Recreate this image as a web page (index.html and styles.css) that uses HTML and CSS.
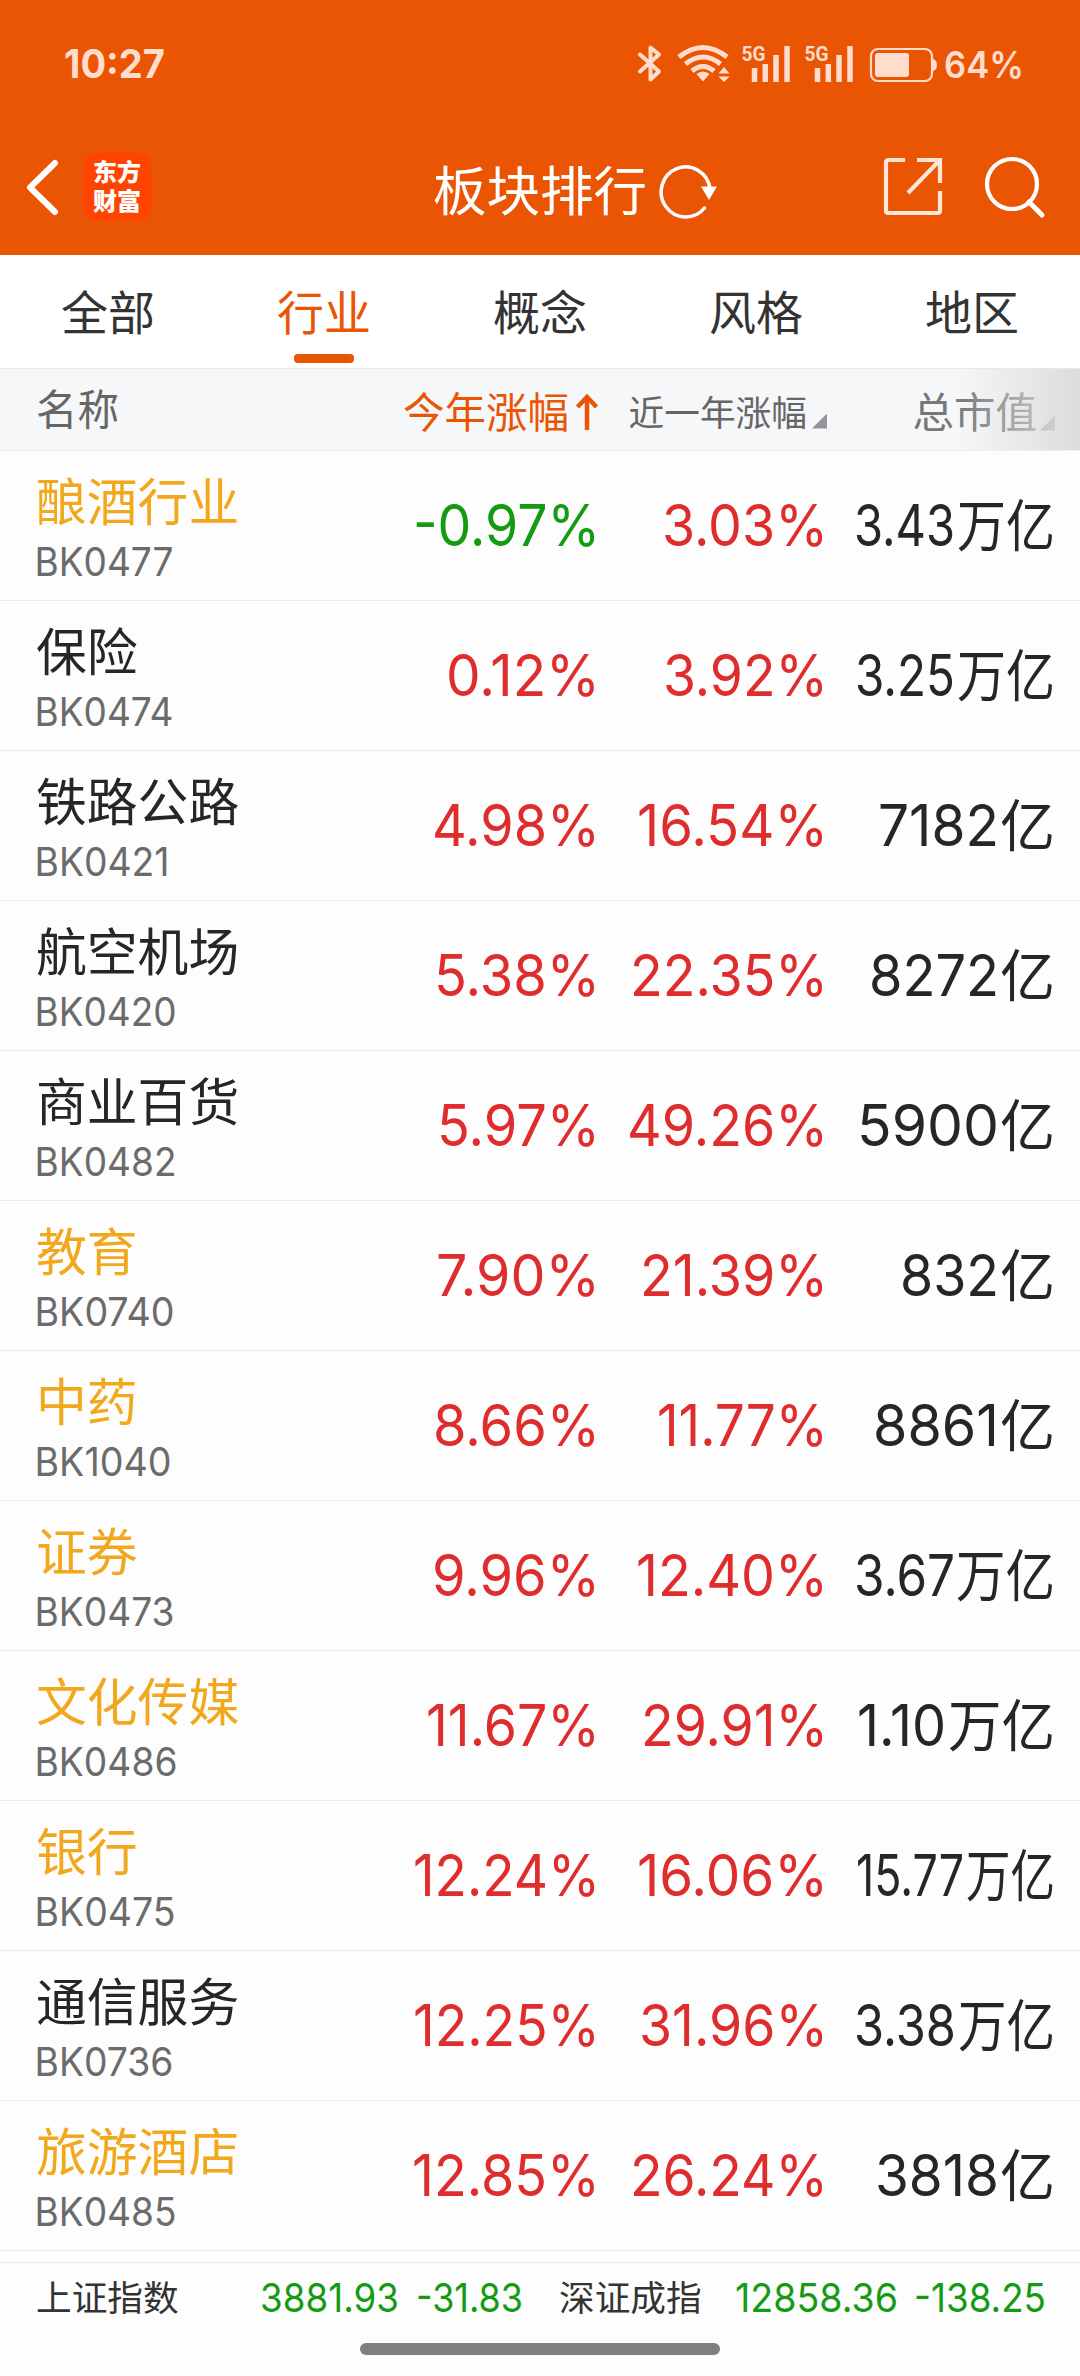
FILE: index.html
```html
<!DOCTYPE html>
<html lang="zh-CN">
<head>
<meta charset="utf-8">
<title>板块排行</title>
<link rel="stylesheet" href="styles.css">
</head>
<body>
<div class="screen">
  <header class="top">
    <div class="status">
      <svg class="clock" width="110" height="60"><text x="0" y="44" textLength="101" lengthAdjust="spacingAndGlyphs">10:27</text></svg>
      <svg class="status-icons" width="303" height="60" viewBox="0 0 303 60" fill="none">
        <g stroke="#ffdccb" stroke-width="4" stroke-linejoin="round" stroke-linecap="round"><path d="M5 20.500 24 37.500 15.500 45.500V13.500L24 20.500 5 37.500"/></g>
        <g stroke="#ffdccb" stroke-width="5"><path d="M44 23Q68 4 92 23M50.500 30Q68 16 85.500 30M57 37Q68 28 79 37"/></g>
        <path fill="#ffdccb" d="M61.500 40Q68 35 74.500 40L68 47.500ZM83.500 39.500 89 33 94.500 39.500ZM83.500 42.500 89 48 94.500 42.500Z"/>
        <text class="net" x="106.500" y="27" textLength="24" lengthAdjust="spacingAndGlyphs">5G</text>
        <path stroke="#ffdccb" stroke-width="5.500" d="M119.500 48V34M130.300 48V30M141 48V21M152 48V12"/>
        <text class="net" x="169.500" y="27" textLength="24" lengthAdjust="spacingAndGlyphs">5G</text>
        <path stroke="#ffdccb" stroke-width="5.500" d="M182.500 48V34M193.300 48V30M204 48V21M215 48V12"/>
        <rect x="236" y="15" width="61" height="32" rx="7" stroke="#ffdccb" stroke-width="2.200"/>
        <rect x="240" y="19" width="34" height="24" rx="3" fill="#ffdccb"/>
        <path d="M298 25Q302 26 302 31T298 37Z" fill="#ffdccb"/>
      </svg>
      <svg class="battery" width="90" height="60"><text x="6" y="43.500" textLength="80" lengthAdjust="spacingAndGlyphs">64%</text></svg>
    </div>
    <div class="nav">
      <svg class="back" width="34" height="60" viewBox="0 0 34 60"><path d="M30 6 5 30.500 30 55" fill="none" stroke="#fff" stroke-width="6" stroke-linecap="round" stroke-linejoin="round"/></svg>
      <div class="logo"><span>东方</span><span>财富</span></div>
      <h1 class="title">板块排行</h1>
      <svg class="refresh" width="62" height="62" viewBox="0 0 62 62"><path d="M46.500 50A24.500 25 0 1 1 52 31" fill="none" stroke="#fff" stroke-width="3.500" stroke-linecap="round"/><path d="M43 28.500H59L51 42Z" fill="#fff"/></svg>
      <svg class="share" width="60" height="62" viewBox="0 0 60 62"><path d="M22 4H5.500Q3 4 3 6.500V54.500Q3 57 5.500 57H54.500Q57 57 57 54.500V35M34 4H57V27M56 5 25 37" fill="none" stroke="#ffe5d8" stroke-width="4.200"/></svg>
      <svg class="search" width="64" height="64" viewBox="0 0 64 64"><circle cx="29" cy="29" r="25" fill="none" stroke="#fff" stroke-width="4.200"/><path d="M46 47 59 60" stroke="#fff" stroke-width="5" stroke-linecap="round"/></svg>
    </div>
  </header>
  <nav class="tabs">
    <span class="tab">全部</span><span class="tab active">行业</span><span class="tab">概念</span><span class="tab">风格</span><span class="tab">地区</span>
  </nav>
  <div class="head">
    <span class="h-name">名称</span>
    <span class="h-year">今年涨幅<svg width="24" height="38" viewBox="0 0 24 38"><path d="M12 37V5M2.500 14 12 4 21.500 14" fill="none" stroke="#ea5504" stroke-width="4.500"/></svg></span>
    <span class="h-last">近一年涨幅<i class="corner"></i></span>
    <span class="h-cap">总市值<i class="corner"></i></span>
  </div>
  <main class="list">
    <div class="row"><div class="name own"><b>酿酒行业</b><svg class="code"><text x="-1.500" y="34" textLength="139" lengthAdjust="spacingAndGlyphs">BK0477</text></svg></div><svg class="pct down"><text x="231" y="95" textLength="187" lengthAdjust="spacingAndGlyphs">-0.97%</text></svg><svg class="pct"><text x="231" y="95" textLength="166" lengthAdjust="spacingAndGlyphs">3.03%</text></svg><svg class="cap"><text x="130" y="95" textLength="101" lengthAdjust="spacingAndGlyphs">3.43</text><text class="unit" x="230" y="95" textLength="98" lengthAdjust="spacingAndGlyphs">万亿</text></svg></div>
    <div class="row"><div class="name"><b>保险</b><svg class="code"><text x="-1.500" y="34" textLength="139" lengthAdjust="spacingAndGlyphs">BK0474</text></svg></div><svg class="pct"><text x="231" y="95" textLength="154" lengthAdjust="spacingAndGlyphs">0.12%</text></svg><svg class="pct"><text x="231" y="95" textLength="165" lengthAdjust="spacingAndGlyphs">3.92%</text></svg><svg class="cap"><text x="130" y="95" textLength="100" lengthAdjust="spacingAndGlyphs">3.25</text><text class="unit" x="230" y="95" textLength="98" lengthAdjust="spacingAndGlyphs">万亿</text></svg></div>
    <div class="row"><div class="name"><b>铁路公路</b><svg class="code"><text x="-1.500" y="34" textLength="135" lengthAdjust="spacingAndGlyphs">BK0421</text></svg></div><svg class="pct"><text x="231" y="95" textLength="168" lengthAdjust="spacingAndGlyphs">4.98%</text></svg><svg class="pct"><text x="231" y="95" textLength="191" lengthAdjust="spacingAndGlyphs">16.54%</text></svg><svg class="cap"><text x="174" y="95" textLength="121" lengthAdjust="spacingAndGlyphs">7182</text><text class="unit" x="230" y="95" textLength="55" lengthAdjust="spacingAndGlyphs">亿</text></svg></div>
    <div class="row"><div class="name"><b>航空机场</b><svg class="code"><text x="-1.500" y="34" textLength="142" lengthAdjust="spacingAndGlyphs">BK0420</text></svg></div><svg class="pct"><text x="231" y="95" textLength="166" lengthAdjust="spacingAndGlyphs">5.38%</text></svg><svg class="pct"><text x="231" y="95" textLength="198" lengthAdjust="spacingAndGlyphs">22.35%</text></svg><svg class="cap"><text x="174" y="95" textLength="130" lengthAdjust="spacingAndGlyphs">8272</text><text class="unit" x="230" y="95" textLength="55" lengthAdjust="spacingAndGlyphs">亿</text></svg></div>
    <div class="row"><div class="name"><b>商业百货</b><svg class="code"><text x="-1.500" y="34" textLength="142" lengthAdjust="spacingAndGlyphs">BK0482</text></svg></div><svg class="pct"><text x="231" y="95" textLength="163" lengthAdjust="spacingAndGlyphs">5.97%</text></svg><svg class="pct"><text x="231" y="95" textLength="201" lengthAdjust="spacingAndGlyphs">49.26%</text></svg><svg class="cap"><text x="174" y="95" textLength="142" lengthAdjust="spacingAndGlyphs">5900</text><text class="unit" x="230" y="95" textLength="55" lengthAdjust="spacingAndGlyphs">亿</text></svg></div>
    <div class="row"><div class="name own"><b>教育</b><svg class="code"><text x="-1.500" y="34" textLength="140" lengthAdjust="spacingAndGlyphs">BK0740</text></svg></div><svg class="pct"><text x="231" y="95" textLength="164" lengthAdjust="spacingAndGlyphs">7.90%</text></svg><svg class="pct"><text x="231" y="95" textLength="188" lengthAdjust="spacingAndGlyphs">21.39%</text></svg><svg class="cap"><text x="174" y="95" textLength="99" lengthAdjust="spacingAndGlyphs">832</text><text class="unit" x="230" y="95" textLength="55" lengthAdjust="spacingAndGlyphs">亿</text></svg></div>
    <div class="row"><div class="name own"><b>中药</b><svg class="code"><text x="-1.500" y="34" textLength="137" lengthAdjust="spacingAndGlyphs">BK1040</text></svg></div><svg class="pct"><text x="231" y="95" textLength="167" lengthAdjust="spacingAndGlyphs">8.66%</text></svg><svg class="pct"><text x="231" y="95" textLength="171" lengthAdjust="spacingAndGlyphs">11.77%</text></svg><svg class="cap"><text x="174" y="95" textLength="126" lengthAdjust="spacingAndGlyphs">8861</text><text class="unit" x="230" y="95" textLength="55" lengthAdjust="spacingAndGlyphs">亿</text></svg></div>
    <div class="row"><div class="name own"><b>证券</b><svg class="code"><text x="-1.500" y="34" textLength="140" lengthAdjust="spacingAndGlyphs">BK0473</text></svg></div><svg class="pct"><text x="231" y="95" textLength="168" lengthAdjust="spacingAndGlyphs">9.96%</text></svg><svg class="pct"><text x="231" y="95" textLength="192" lengthAdjust="spacingAndGlyphs">12.40%</text></svg><svg class="cap"><text x="130" y="95" textLength="101" lengthAdjust="spacingAndGlyphs">3.67</text><text class="unit" x="230" y="95" textLength="99" lengthAdjust="spacingAndGlyphs">万亿</text></svg></div>
    <div class="row"><div class="name own"><b>文化传媒</b><svg class="code"><text x="-1.500" y="34" textLength="143" lengthAdjust="spacingAndGlyphs">BK0486</text></svg></div><svg class="pct"><text x="231" y="95" textLength="174" lengthAdjust="spacingAndGlyphs">11.67%</text></svg><svg class="pct"><text x="231" y="95" textLength="187" lengthAdjust="spacingAndGlyphs">29.91%</text></svg><svg class="cap"><text x="121" y="95" textLength="89" lengthAdjust="spacingAndGlyphs">1.10</text><text class="unit" x="230" y="95" textLength="107" lengthAdjust="spacingAndGlyphs">万亿</text></svg></div>
    <div class="row"><div class="name own"><b>银行</b><svg class="code"><text x="-1.500" y="34" textLength="141" lengthAdjust="spacingAndGlyphs">BK0475</text></svg></div><svg class="pct"><text x="231" y="95" textLength="187" lengthAdjust="spacingAndGlyphs">12.24%</text></svg><svg class="pct"><text x="231" y="95" textLength="191" lengthAdjust="spacingAndGlyphs">16.06%</text></svg><svg class="cap"><text x="139" y="95" textLength="108" lengthAdjust="spacingAndGlyphs">15.77</text><text class="unit" x="230" y="95" textLength="89" lengthAdjust="spacingAndGlyphs">万亿</text></svg></div>
    <div class="row"><div class="name"><b>通信服务</b><svg class="code"><text x="-1.500" y="34" textLength="139" lengthAdjust="spacingAndGlyphs">BK0736</text></svg></div><svg class="pct"><text x="231" y="95" textLength="187" lengthAdjust="spacingAndGlyphs">12.25%</text></svg><svg class="pct"><text x="231" y="95" textLength="189" lengthAdjust="spacingAndGlyphs">31.96%</text></svg><svg class="cap"><text x="131" y="95" textLength="102" lengthAdjust="spacingAndGlyphs">3.38</text><text class="unit" x="230" y="95" textLength="97" lengthAdjust="spacingAndGlyphs">万亿</text></svg></div>
    <div class="row"><div class="name own"><b>旅游酒店</b><svg class="code"><text x="-1.500" y="34" textLength="142" lengthAdjust="spacingAndGlyphs">BK0485</text></svg></div><svg class="pct"><text x="231" y="95" textLength="188" lengthAdjust="spacingAndGlyphs">12.85%</text></svg><svg class="pct"><text x="231" y="95" textLength="198" lengthAdjust="spacingAndGlyphs">26.24%</text></svg><svg class="cap"><text x="174" y="95" textLength="124" lengthAdjust="spacingAndGlyphs">3818</text><text class="unit" x="230" y="95" textLength="55" lengthAdjust="spacingAndGlyphs">亿</text></svg></div>
  </main>
  <footer class="indices">
    <span class="idx">上证指数</span>
    <svg class="val" width="297" height="50"><text x="-2" y="39" textLength="139" lengthAdjust="spacingAndGlyphs">3881.93</text><text x="154" y="39" textLength="107" lengthAdjust="spacingAndGlyphs">-31.83</text></svg>
    <span class="idx sz">深证成指</span>
    <svg class="val" width="320" height="50"><text x="-2" y="39" textLength="163" lengthAdjust="spacingAndGlyphs">12858.36</text><text x="177" y="39" textLength="132" lengthAdjust="spacingAndGlyphs">-138.25</text></svg>
  </footer>
  <div class="home"></div>
</div>
</body>
</html>
```
FILE: styles.css
```css
* { box-sizing: border-box; }
body { margin: 0; background: #fdfdfd; font-family: Inter, "Noto Sans CJK SC", sans-serif; color: #262626; }
svg { flex: none; }
.screen { width: 1080px; height: 2376px; display: flex; flex-direction: column; overflow: hidden; }
.top { height: 255px; background: #ea5504; color: #fff; flex: none; }
.status { height: 128px; padding-left: 64px; display: flex; align-items: center; fill: #ffdccb; font-weight: 700; }
.clock { margin-right: 461px; font-size: 40px; }
.net { font: 700 21px Roboto, sans-serif; fill: #ffdccb; }
.battery { font-size: 37px; font-weight: 600; }
.nav { height: 127px; display: flex; align-items: center; padding: 0 0 10px 25px; }
.logo { width: 68px; height: 68px; margin-left: 24px; border-radius: 14px; background: #ff4300; display: flex; flex-direction: column; align-items: center; justify-content: center; padding-bottom: 3px; font: 900 24px/29px "Noto Sans CJK SC", sans-serif; }
.title { margin: 2px 0 0 282px; font: 400 53.5px/70px "Noto Sans CJK SC", sans-serif; }
.refresh { margin: 4px 0 0 11px; }
.share { margin-left: 163px; }
.search { margin-left: 40px; }
.tabs { height: 114px; flex: none; display: grid; grid-template-columns: repeat(5, 216px); border-bottom: 1px solid #e8e8e8; background: #fff; }
.tab { display: flex; flex-direction: column; align-items: center; font: 400 47px/68px "Noto Sans CJK SC", sans-serif; padding-top: 21px; color: #333; }
.tab.active { color: #ea5504; }
.tab.active::after { content: ""; width: 60px; height: 9px; margin-top: 10px; border-radius: 4px; background: #ea5504; }
.head { height: 82px; flex: none; position: relative; display: grid; grid-template-columns: 382px 217px 228px 253px; align-items: center; background: #f6f7f9; border-bottom: 1px solid #f0f0f0; color: #666; font: 400 41.5px/60px "Noto Sans CJK SC", sans-serif; white-space: nowrap; }
.head::after { content: ""; position: absolute; top: 0; right: 0; bottom: 0; width: 125px; background: linear-gradient(90deg, rgba(220, 220, 220, 0), #dcdcdc); }
.h-name { padding: 0 0 5px 36px; }
.h-year { display: flex; align-items: center; color: #ea5504; justify-content: flex-end; gap: 6px; }
.h-year svg { margin-top: 4px; }
.h-last, .h-cap { display: flex; justify-content: flex-end; align-items: baseline; gap: 5px; }
.h-last { font-size: 35.7px; padding-top: 2px; }
.h-cap { padding-right: 25px; color: #777; gap: 3px; }
.corner { width: 15px; height: 15px; background: #939399; clip-path: polygon(100% 0, 100% 100%, 0 100%); position: relative; top: 3px; }
.list { flex: none; }
.row { height: 150px; display: grid; grid-template-columns: 370px 227px 228px 229px; border-bottom: 1px solid #ebebeb; white-space: nowrap; }
.name { padding: 16px 0 0 36px; display: flex; flex-direction: column; }
.name b { font: 400 50.8px/64px "Noto Sans CJK SC", sans-serif; }
.code { width: 180px; height: 50px; margin-top: 11px; overflow: visible; font-size: 39.5px; font-weight: 400; fill: #6b6b6b; }
.own b { color: #f2a81d; }
.pct, .cap { width: 229px; height: 149px; overflow: visible; text-anchor: end; font-size: 58px; font-weight: 400; fill: #df2d2d; }
.pct { margin-left: -1px; }
.row .pct + .pct { margin-left: 0; }
.pct.down { fill: #159a14; }
.cap { fill: #262626; }
.unit { font: 400 56px "Noto Sans CJK SC", sans-serif; }
.indices { height: 71px; margin-top: 11px; flex: none; border-top: 1px solid #e8e8e8; display: flex; align-items: center; padding-left: 36px; color: #333; }
.idx { width: 226px; padding-bottom: 4px; font: 400 35.7px/50px "Noto Sans CJK SC", sans-serif; }
.idx.sz { width: 178px; }
.val { fill: #159a14; font-size: 40px; font-weight: 400; overflow: visible; }
.home { width: 360px; height: 12px; margin: 10px auto 0; border-radius: 6px; background: #808080; }
```
